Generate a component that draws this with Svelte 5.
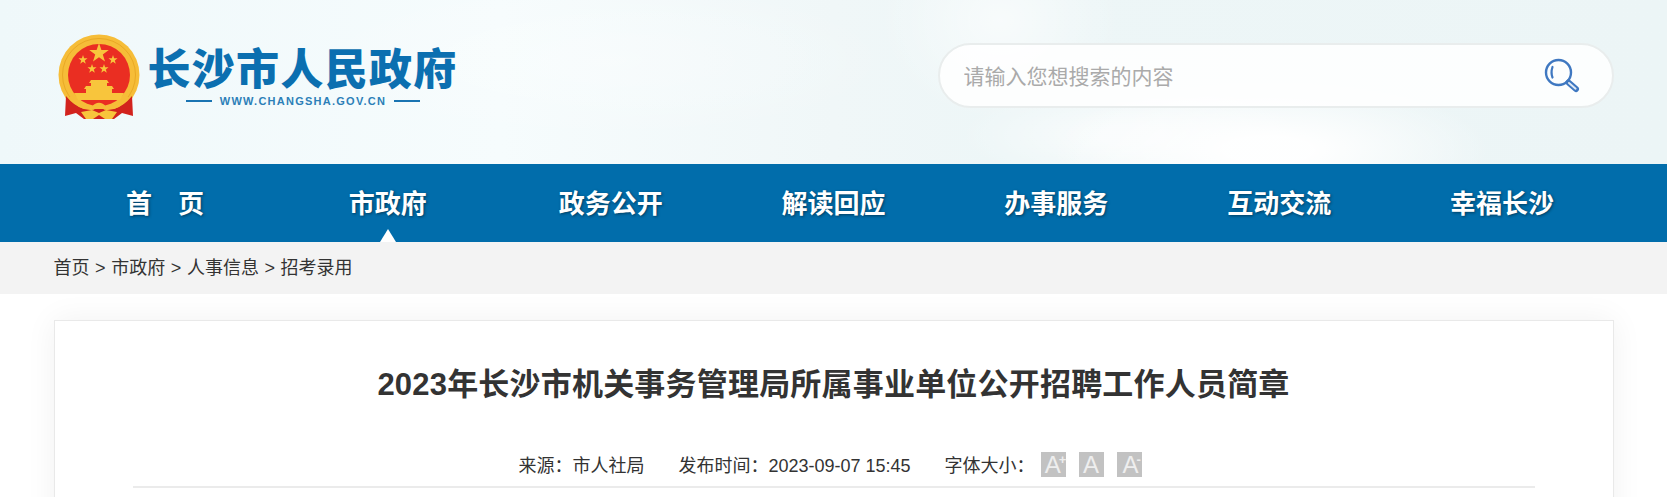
<script>
	const navItems = ['首　页', '市政府', '政务公开', '解读回应', '办事服务', '互动交流', '幸福长沙'];
	const crumbs = ['首页', '市政府', '人事信息', '招考录用'];
	const sizes = [{ mark: '+' }, { mark: '' }, { mark: '-' }];
	const activeNav = 1;
</script>

<div class="page">
	<header class="top">
		<div class="wrap top-in">
			<div class="logo">
				<svg class="emblem" viewBox="0 0 82 88" width="82" height="88">
					<circle cx="41" cy="41" r="40.5" fill="#f6bd38" />
					<circle cx="41" cy="41" r="36.5" fill="none" stroke="#e9a925" stroke-width="1" />
					<circle cx="41" cy="41" r="31" fill="#ea2e22" />
					<g fill="#f8c53c">
						<polygon points="41,9 43.4,16 50.8,16 44.8,20.4 47,27.6 41,23.3 35,27.6 37.2,20.4 31.2,16 38.6,16" />
						<polygon points="25,21 26.1,24.3 29.5,24.3 26.8,26.4 27.8,29.7 25,27.7 22.2,29.7 23.2,26.4 20.5,24.3 23.9,24.3" />
						<polygon points="55,21 56.1,24.3 59.5,24.3 56.8,26.4 57.8,29.7 55,27.7 52.2,29.7 53.2,26.4 50.5,24.3 53.9,24.3" />
						<polygon points="34,30 35.1,33.3 38.5,33.3 35.8,35.4 36.8,38.7 34,36.7 31.2,38.7 32.2,35.4 29.5,33.3 32.9,33.3" />
						<polygon points="46,30 47.1,33.3 50.5,33.3 47.8,35.4 48.8,38.7 46,36.7 43.2,38.7 44.2,35.4 41.5,33.3 44.9,33.3" />
						<path d="M33 46 H49 L51 49 H31 Z" />
						<rect x="33" y="49" width="16" height="3" />
						<path d="M28 52 H54 L56 55 H26 Z" />
						<rect x="28" y="55" width="26" height="4" />
						<path d="M16 59 H66 L62 66 H20 Z" />
					</g>
					<path d="M8 62 Q16 72 26 75 L56 75 Q66 72 74 62 L75 82 L64 79 L56 85 H26 L18 79 L7 82 Z" fill="#d2221d" />
					<path d="M12 63 Q24 76 35 74 Q41 67 47 74 Q58 76 70 63" fill="none" stroke="#f6bd38" stroke-width="3.6" />
					<path d="M23 78 L34 76 L41 79 L48 76 L59 78 L54 85 H47 L41 81 L35 85 H28 Z" fill="#f8c53c" />
				</svg>
				<div class="logo-text">
					<div class="logo-name">长沙市人民政府</div>
					<div class="logo-url"><i></i><span>WWW.CHANGSHA.GOV.CN</span><i></i></div>
				</div>
			</div>
			<form class="search" on:submit|preventDefault>
				<input type="text" placeholder="请输入您想搜索的内容" />
				<svg class="search-icon" viewBox="0 0 36 36" width="36" height="36">
					<circle cx="14.5" cy="14.5" r="12.5" fill="none" stroke="#3f78c1" stroke-width="2.4" />
					<path d="M8.5 9 Q6.6 14.5 8.5 19.5" fill="none" stroke="#3f78c1" stroke-width="2.2" stroke-linecap="round" />
					<path d="M24.5 24.5 L32 31" stroke="#3f78c1" stroke-width="6" stroke-linecap="round" />
					<path d="M25 25 L31.6 30.7" stroke="#dfe9f5" stroke-width="2" stroke-linecap="round" />
				</svg>
			</form>
		</div>
	</header>

	<nav class="nav">
		<ul class="wrap nav-in">
			{#each navItems as item, i}
				<li class:active={i === activeNav}>{item}</li>
			{/each}
		</ul>
	</nav>

	<div class="crumbs">
		<div class="wrap">
			{#each crumbs as c, i}{#if i > 0}<span class="sep">&gt;</span>{/if}<a href="#top">{c}</a>{/each}
		</div>
	</div>

	<main class="wrap card">
		<h1>2023年长沙市机关事务管理局所属事业单位公开招聘工作人员简章</h1>
		<div class="meta">
			<span>来源：市人社局</span>
			<span>发布时间：2023-09-07 15:45</span>
			<span class="sizes">
				字体大小：
				{#each sizes as s}
					<button type="button">A{#if s.mark}<sup>{s.mark}</sup>{/if}</button>
				{/each}
			</span>
		</div>
		<div class="rule"></div>
	</main>
</div>

<style>
	:global(body) {
		margin: 0;
		background: #fff;
		overflow: hidden;
	}
	.page {
		height: 497px;
		overflow: hidden;
		font-family: "Liberation Sans", "Noto Sans CJK SC", sans-serif;
		color: #333;
	}
	.wrap {
		width: 1560px;
		margin: 0 auto;
	}
	.top {
		height: 164px;
		background:
			radial-gradient(ellipse 220px 70px at 1270px 150px, rgba(255, 255, 255, 0.95) 20%, rgba(255, 255, 255, 0) 100%),
			radial-gradient(ellipse 170px 50px at 1130px 135px, rgba(255, 255, 255, 0.6) 20%, rgba(255, 255, 255, 0) 100%),
			radial-gradient(ellipse 120px 100px at 1000px 20px, rgba(255, 255, 255, 0.6) 0%, rgba(255, 255, 255, 0) 100%),
			radial-gradient(ellipse 300px 80px at 600px 60px, rgba(255, 255, 255, 0.35) 0%, rgba(255, 255, 255, 0) 100%),
			linear-gradient(90deg, #eff8fa 0%, #f6fcfd 30%, #f0f7f8 50%, #edf6f7 60%, #ecf5f6 100%);
	}
	.top-in {
		display: flex;
		justify-content: space-between;
		align-items: flex-start;
		box-sizing: border-box;
		height: 100%;
		padding-left: 4px;
	}
	.logo {
		display: flex;
		gap: 8px;
		padding-top: 34px;
	}
	.logo-name {
		font-family: "Noto Sans CJK SC", sans-serif;
		font-weight: 900;
		font-size: 43px;
		line-height: 48px;
		letter-spacing: 1.3px;
		color: #0b6fb0;
		margin-top: 8px;
		white-space: nowrap;
	}
	.logo-url {
		display: flex;
		align-items: center;
		justify-content: center;
		gap: 8px;
		margin-top: 4px;
		width: 311px;
		color: #2c7fb8;
		font-size: 11px;
		font-weight: bold;
		line-height: 14px;
		letter-spacing: 1.25px;
	}
	.logo-url i {
		width: 26px;
		height: 2px;
		background: #1a74b2;
	}
	.search {
		display: flex;
		align-items: center;
		justify-content: space-between;
		box-sizing: border-box;
		width: 676px;
		height: 65px;
		margin-top: 43px;
		padding: 0 32px 0 24px;
		background: rgba(255, 255, 255, 0.85);
		border: 2px solid #e9eded;
		border-radius: 33px;
	}
	.search input {
		flex: 1;
		border: 0;
		outline: 0;
		background: transparent;
		font: 21px "Liberation Sans", "Noto Sans CJK SC", sans-serif;
		padding: 2px 0 0;
	}
	.search input::placeholder {
		color: #aaa;
		opacity: 1;
	}
	.nav {
		height: 78px;
		background: #016dab;
	}
	.nav-in {
		display: grid;
		grid-template-columns: repeat(7, 1fr);
		height: 100%;
		padding: 0;
		list-style: none;
	}
	.nav li {
		position: relative;
		display: flex;
		align-items: center;
		justify-content: center;
		padding-bottom: 4px;
		color: #fff;
		font-family: "Noto Sans CJK SC", sans-serif;
		font-size: 26px;
		font-weight: bold;
		text-shadow: 1px 1px 3px rgba(0, 0, 0, 0.45);
	}
	.nav li.active::after {
		content: "";
		position: absolute;
		left: 50%;
		bottom: 0;
		margin-left: -8px;
		border: solid transparent;
		border-width: 0 8px 13px;
		border-bottom-color: #fff;
	}
	.crumbs {
		height: 52px;
		line-height: 52px;
		background: #f3f3f3;
		font-size: 18px;
		color: #333;
	}
	.crumbs a {
		color: #333;
		text-decoration: none;
	}
	.sep {
		padding: 0 5.6px;
	}
	.card {
		box-sizing: border-box;
		height: 400px;
		margin-top: 26px;
		padding: 0 78px;
		background: #fff;
		border: 1px solid #e9e9e9;
		box-shadow: 0 0 30px rgba(0, 0, 0, 0.06);
	}
	h1 {
		margin: 42px 0 0;
		text-align: center;
		font-size: 31px;
		letter-spacing: 0.2px;
		line-height: 44px;
		font-weight: bold;
		color: #333;
	}
	.meta {
		display: flex;
		justify-content: center;
		align-items: center;
		gap: 34px;
		box-sizing: border-box;
		height: 30px;
		margin-top: 42px;
		padding-right: 7px;
		font-size: 18px;
	}
	.sizes {
		display: flex;
		align-items: center;
	}
	.sizes button {
		width: 25px;
		height: 25px;
		margin-left: 13px;
		padding: 0;
		border: 0;
		background: #c2c2c2;
		color: #eee;
		font: 24px "Liberation Sans", sans-serif;
		line-height: 25px;
		white-space: nowrap;
	}
	.sizes button:first-of-type {
		margin-left: 6px;
	}
	.sizes sup {
		font-size: 13px;
		font-weight: bold;
		line-height: 0;
		vertical-align: 9px;
		margin-left: -2px;
		margin-right: -5px;
	}
	.rule {
		height: 2px;
		margin-top: 7px;
		background: #ebebeb;
	}
</style>
